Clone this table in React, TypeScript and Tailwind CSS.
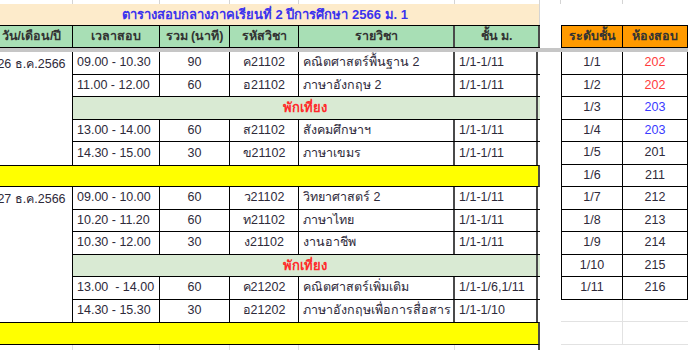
import React from 'react';

type Exam = { time: string; mins: string; code: string; name: string; cls: string };
type Row = Exam | 'lunch';

const days: { date: string; rows: Row[] }[] = [
  {
    date: '26 ธ.ค.2566',
    rows: [
      { time: '09.00 - 10.30', mins: '90', code: 'ค21102', name: 'คณิตศาสตร์พื้นฐาน 2', cls: '1/1-1/11' },
      { time: '11.00 - 12.00', mins: '60', code: 'อ21102', name: 'ภาษาอังกฤษ 2', cls: '1/1-1/11' },
      'lunch',
      { time: '13.00 - 14.00', mins: '60', code: 'ส21102', name: 'สังคมศึกษาฯ', cls: '1/1-1/11' },
      { time: '14.30 - 15.00', mins: '30', code: 'ข21102', name: 'ภาษาเขมร', cls: '1/1-1/11' },
    ],
  },
  {
    date: '27 ธ.ค.2566',
    rows: [
      { time: '09.00 - 10.00', mins: '60', code: 'ว21102', name: 'วิทยาศาสตร์ 2', cls: '1/1-1/11' },
      { time: '10.20 - 11.20', mins: '60', code: 'ท21102', name: 'ภาษาไทย', cls: '1/1-1/11' },
      { time: '10.30 - 12.00', mins: '30', code: 'ง21102', name: 'งานอาชีพ', cls: '1/1-1/11' },
      'lunch',
      { time: '13.00  - 14.00', mins: '60', code: 'ค21202', name: 'คณิตศาสตร์เพิ่มเติม', cls: '1/1-1/6,1/11' },
      { time: '14.30 - 15.30', mins: '30', code: 'อ21202', name: 'ภาษาอังกฤษเพื่อการสื่อสาร', cls: '1/1-1/10' },
    ],
  },
];

const rooms: { level: string; room: string; tone?: 'red' | 'blue' }[] = [
  { level: '1/1', room: '202', tone: 'red' },
  { level: '1/2', room: '202', tone: 'red' },
  { level: '1/3', room: '203', tone: 'blue' },
  { level: '1/4', room: '203', tone: 'blue' },
  { level: '1/5', room: '201' },
  { level: '1/6', room: '211' },
  { level: '1/7', room: '212' },
  { level: '1/8', room: '213' },
  { level: '1/9', room: '214' },
  { level: '1/10', room: '215' },
  { level: '1/11', room: '216' },
];

function ExamRow({ row, last }: { row: Row; last: boolean }) {
  const edge = last ? '' : 'border-b border-black';
  if (row === 'lunch') {
    return (
      <div className={`flex h-[22.5px] bg-[#d9ead3] ${edge}`}>
        <div className="flex w-[465px] items-center justify-center border-r-2 border-[#4a4a4a] text-[13px] font-bold text-[#ff2a2a]">
          พักเที่ยง
        </div>
      </div>
    );
  }
  return (
    <div className={`flex h-[22.5px] bg-white ${edge}`}>
      <div className="flex w-[87px] items-center border-r border-black pl-1 whitespace-pre">{row.time}</div>
      <div className="flex w-[70px] items-center justify-center border-r border-black">{row.mins}</div>
      <div className="flex w-[69px] items-center justify-center border-r border-black">{row.code}</div>
      <div className="flex w-[156px] items-center border-r-2 border-[#4a4a4a] pl-1 whitespace-nowrap">{row.name}</div>
      <div className="flex w-[83px] items-center border-r-2 border-[#4a4a4a] pl-1">{row.cls}</div>
    </div>
  );
}

function YellowBar() {
  return <div className="h-[22.5px] border-y border-black bg-[#ffff00] border-r-2 border-r-[#4a4a4a]" />;
}

export default function App() {
  return (
    <div className="h-[350px] w-[688px] overflow-hidden bg-white font-['Liberation_Sans','Noto_Sans',sans-serif] text-[12.5px] text-[#2e2a3a]">
      <div className="-ml-[9px] w-[697px]">
        {/* sheet row above the title */}
        <div className="flex h-[4px]">
          <div className="w-[82px] border-r border-[#d4d4d4]" />
          <div className="w-[87px] border-r border-[#d4d4d4]" />
          <div className="w-[70px] border-r border-[#d4d4d4]" />
          <div className="w-[69px] border-r border-[#d4d4d4]" />
          <div className="w-[156px] border-r border-[#d4d4d4]" />
          <div className="w-[85px] border-r border-[#d4d4d4]" />
          <div className="w-[21px] border-r border-[#d4d4d4]" />
          <div className="w-[62px] border-r border-[#d4d4d4]" />
          <div className="flex-1" />
        </div>

        {/* title */}
        <div className="flex h-[21px]">
          <div className="flex w-[549px] items-center justify-center border-r border-[#d4d4d4] bg-[#fdebcb] text-[13px] font-bold text-[#3b33ee]">
            ตารางสอบกลางภาคเรียนที่ 2 ปีการศึกษา 2566 ม. 1
          </div>
          <div className="flex-1" />
        </div>

        {/* headers */}
        <div className="flex h-[23px] font-bold text-[#333]">
          <div className="flex w-[549px] border-y border-black bg-[#a8dfb5]">
            <div className="flex w-[82px] items-center justify-center border-r border-black">วัน/เดือน/ปี</div>
            <div className="flex w-[87px] items-center justify-center border-r border-black">เวลาสอบ</div>
            <div className="flex w-[70px] items-center justify-center border-r border-black">รวม (นาที)</div>
            <div className="flex w-[69px] items-center justify-center border-r border-black">รหัสวิชา</div>
            <div className="flex w-[156px] items-center justify-center border-r-2 border-[#4a4a4a]">รายวิชา</div>
            <div className="flex w-[85px] items-center justify-center border-r-2 border-[#4a4a4a]">ชั้น ม.</div>
          </div>
          <div className="w-[21px]" />
          <div className="flex w-[127px] border border-black bg-[#ff9a00]">
            <div className="flex w-[61px] items-center justify-center border-r border-black">ระดับชั้น</div>
            <div className="flex flex-1 items-center justify-center">ห้องสอบ</div>
          </div>
        </div>

        {/* frozen pane divider */}
        <div className="h-[4px] bg-[#c6c6c6]" />

        <div className="flex">
          {/* exam schedule */}
          <div className="w-[549px]">
            {days.map((day) => (
              <React.Fragment key={day.date}>
                <div className="flex">
                  <div className="w-[82px] border-r border-black pt-[3px] text-center">{day.date}</div>
                  <div className="w-[467px]">
                    {day.rows.map((row, i) => (
                      <ExamRow key={i} row={row} last={i === day.rows.length - 1} />
                    ))}
                  </div>
                </div>
                <YellowBar />
              </React.Fragment>
            ))}
            <div className="flex h-[10px]">
              <div className="w-[82px] border-r border-[#e0e0e0]" />
              <div className="w-[87px] border-r border-[#e0e0e0]" />
              <div className="w-[70px] border-r border-[#e0e0e0]" />
              <div className="w-[69px] border-r border-[#e0e0e0]" />
              <div className="w-[156px] border-r border-[#e0e0e0]" />
              <div className="w-[85px] border-r-2 border-[#4a4a4a]" />
            </div>
          </div>

          <div className="w-[21px]" />

          {/* room list */}
          <div className="w-[127px]">
            <div className="border-x border-black">
              {rooms.map((r) => (
                <div key={r.level} className="flex h-[22.5px] border-b border-black">
                  <div className="flex w-[61px] items-center justify-center border-r border-black">{r.level}</div>
                  <div
                    className={`flex flex-1 items-center justify-center ${
                      r.tone === 'red' ? 'text-[#ff3b3b]' : r.tone === 'blue' ? 'text-[#3a3aff]' : ''
                    }`}
                  >
                    {r.room}
                  </div>
                </div>
              ))}
            </div>
            <div className="flex h-[22.5px] border-b border-[#e2e2e2]">
              <div className="w-[62px] border-r border-[#e2e2e2]" />
            </div>
            <div className="flex h-[22.5px] border-b border-[#e2e2e2]">
              <div className="w-[62px] border-r border-[#e2e2e2]" />
            </div>
          </div>
        </div>
      </div>
    </div>
  );
}
